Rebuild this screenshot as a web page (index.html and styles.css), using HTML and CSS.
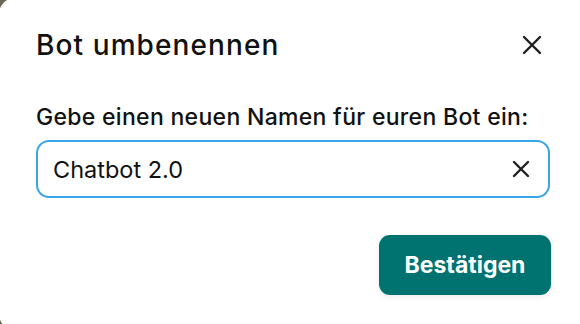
FILE: index.html
```html
<!DOCTYPE html>
<html>
<head>
<meta charset="utf-8">
<link rel="stylesheet" href="styles.css">
</head>
<body>
<div class="dialog">
  <div class="header">
    <h1 class="title">Bot umbenennen</h1>
    <button class="close" aria-label="Schließen">
      <svg width="20" height="20" viewBox="0 0 20 20"><path d="M2 2L18 18M18 2L2 18" stroke="#1f1f1f" stroke-width="2.4" stroke-linecap="round"/></svg>
    </button>
  </div>
  <label class="label">Gebe einen neuen Namen für euren Bot ein:</label>
  <div class="input">
    <span class="value">Chatbot 2.0</span>
    <span class="clear">
      <svg width="18" height="18" viewBox="0 0 18 18"><path d="M2 2L16 16M16 2L2 16" stroke="#1f1f1f" stroke-width="2.4" stroke-linecap="round"/></svg>
    </span>
  </div>
  <div class="actions">
    <button class="confirm">Bestätigen</button>
  </div>
</div>
</body>
</html>
```
FILE: styles.css
```css
html, body { margin: 0; padding: 0; }
body {
  width: 580px;
  height: 324px;
  overflow: hidden;
  background: #6b6659;
  font-family: Inter, "Noto Sans", sans-serif;
  color: #111;
}
.dialog {
  box-sizing: border-box;
  width: 600px;
  height: 332px;
  margin: -2px 0 0 -1px;
  background: #fff;
  border-radius: 16px;
  padding: 28px 50px 0 37px;
}
.header {
  display: flex;
  align-items: center;
  justify-content: space-between;
  height: 38px;
}
.title {
  margin: 0;
  font-size: 28px;
  font-weight: 500;
  line-height: 38px;
  letter-spacing: 1.1px;
}
.close {
  border: 0;
  background: none;
  padding: 0;
  width: 20px;
  height: 20px;
  margin-right: 7px;
  display: flex;
}
.label {
  display: block;
  margin-top: 40px;
  font-size: 23px;
  font-weight: 500;
  line-height: 26px;
  letter-spacing: 0.3px;
}
.input {
  box-sizing: border-box;
  margin-top: 10px;
  width: 514px;
  height: 58px;
  border: 2.5px solid #3aa6e9;
  border-radius: 13px;
  display: flex;
  align-items: center;
  justify-content: space-between;
  padding: 0 18px 0 15px;
}
.value { font-size: 23.5px; }
.clear { display: flex; }
.actions {
  display: flex;
  justify-content: flex-end;
  margin-top: 37px;
  width: 515px;
}
.confirm {
  border: 0;
  background: #007370;
  color: #fff;
  font-family: inherit;
  font-size: 23px;
  font-weight: 700;
  width: 172px;
  height: 60px;
  border-radius: 11px;
  box-shadow: 0 2px 6px rgba(0,0,0,0.08);
}
```
